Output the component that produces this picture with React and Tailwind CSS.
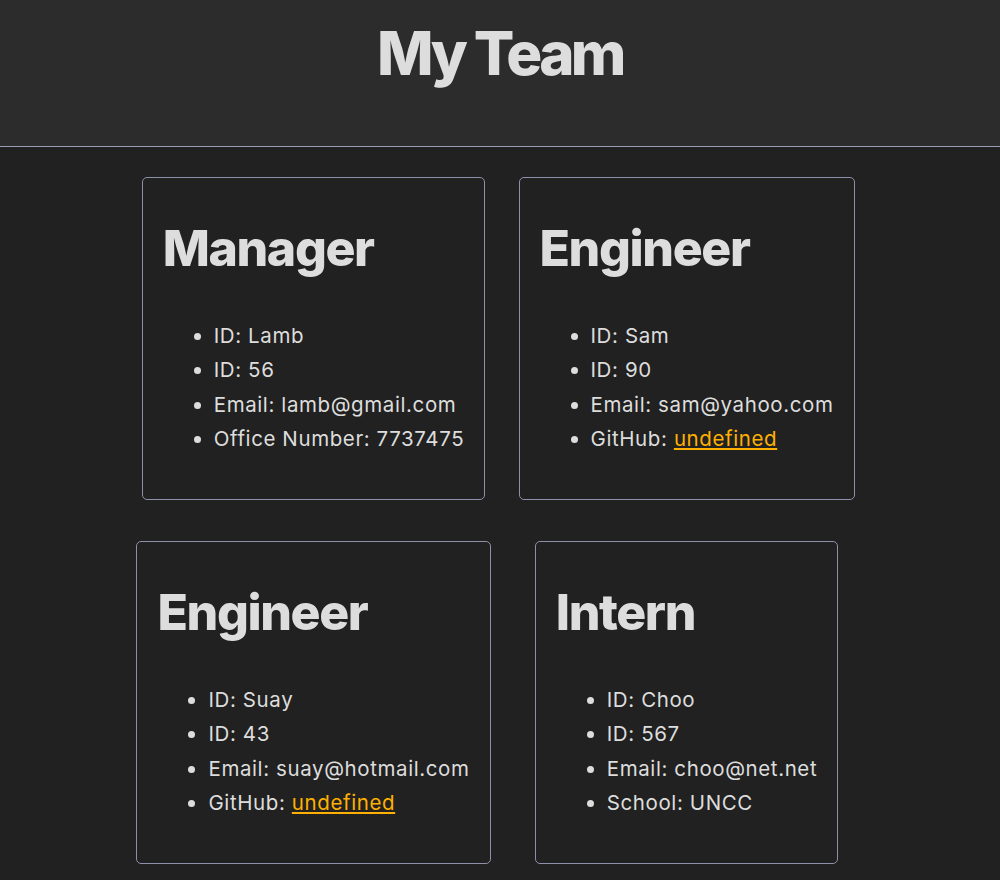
import React from 'react'

// team data as rendered on the page
const team = [
  { role: 'Manager', name: 'Lamb', id: '56', email: 'lamb@gmail.com', extra: { label: 'Office Number', value: '7737475' } },
  { role: 'Engineer', name: 'Sam', id: '90', email: 'sam@yahoo.com', extra: { label: 'GitHub', link: 'undefined' } },
  { role: 'Engineer', name: 'Suay', id: '43', email: 'suay@hotmail.com', extra: { label: 'GitHub', link: 'undefined' } },
  { role: 'Intern', name: 'Choo', id: '567', email: 'choo@net.net', extra: { label: 'School', value: 'UNCC' } },
]

function Card({ member }) {
  const { role, name, id, email, extra } = member
  return (
    <div className="w-fit border border-[#8e90aa] rounded-[5px] p-5">
      <h2 className="mt-5 text-[50px] leading-[60px] font-extrabold tracking-[-1.4px] text-[#dddddd]">{role}</h2>
      <ul className="mt-[41px] mb-[23px] pl-[51px] list-disc text-[20.5px] leading-[34.3px] tracking-[0.6px] text-[#dddddd]">
        <li>ID: {name}</li>
        <li>ID: {id}</li>
        <li>Email: {email}</li>
        <li>
          {extra.label}:{' '}
          {extra.link ? (
            <a href="#" className="text-[#ffb000] underline underline-offset-2">{extra.link}</a>
          ) : (
            extra.value
          )}
        </li>
      </ul>
    </div>
  )
}

export default function App() {
  return (
    <div className="min-h-[880px] bg-[#212121] font-['Inter',sans-serif]">
      <header className="h-[147px] bg-[#2c2c2c] border-b border-[#9a9cb8] pt-[17px]">
        <h1 className="text-center text-[60px] leading-[73px] font-extrabold tracking-[-3.6px] text-[#dddddd]">My Team</h1>
      </header>

      <main className="max-w-[746px] mx-auto grid grid-cols-2 justify-items-center gap-y-[41px] pt-[30px] pb-10">
        {team.map((m, i) => (
          <Card key={i} member={m} />
        ))}
      </main>
    </div>
  )
}
